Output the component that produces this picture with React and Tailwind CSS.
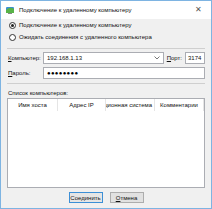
import React from 'react';

const cols = [
  { label: 'Имя хоста', w: 'w-[50px]', align: 'justify-center' },
  { label: 'Адрес IP', w: 'w-[48px]', align: 'justify-center' },
  { label: 'ционная система', w: 'w-[49px]', align: 'justify-end' },
  { label: 'Комментарии', w: 'flex-1', align: 'justify-center' },
];

const Radio = ({ checked, children }) => (
  <div className="flex items-center gap-[3px] h-[12px]">
    <span className="w-[7px] h-[7px] rounded-full border border-[#333] bg-white flex items-center justify-center">
      {checked && <span className="w-[3px] h-[3px] rounded-full bg-[#222]" />}
    </span>
    <span>{children}</span>
  </div>
);

export default function App() {
  return (
    <div
      className="w-[212px] h-[209px] border border-[#7eb4e2] bg-[#f0f0f0] flex flex-col text-[6px] text-[#111] leading-none"
      style={{ fontFamily: '"Liberation Sans", Arial, sans-serif' }}
    >
      {/* Title bar */}
      <div className="h-[18px] bg-white flex items-center px-[4px] shrink-0">
        <svg width="10" height="10" viewBox="0 0 10 10" className="mr-[4px]">
          <rect x="1" y="2" width="8" height="6" rx="1" fill="#3c8fd6" />
          <path d="M1 5 Q5 1 9 4 L9 8 L1 8 Z" fill="#58b348" />
          <rect x="3" y="8" width="4" height="1" fill="#888" />
        </svg>
        <span className="text-[6px]">Подключение к удаленному компьютеру</span>
        <span className="ml-auto mr-[5px] text-[8px] text-[#555]">✕</span>
      </div>

      {/* Body */}
      <div className="flex-1 flex flex-col px-[6px]">
        <div className="pl-[2px] flex flex-col">
          <Radio checked>Подключение к удаленному компьютеру</Radio>
          <Radio>Ожидать соединения с удаленного компьютера</Radio>
        </div>
        <div className="h-px bg-[#cfcfcf] mt-[5px]" />

        <div className="flex items-center h-[12px] mt-[3px]">
          <span className="w-[36px] pl-[1px]"><u>К</u>омпьютер:</span>
          <div className="flex-1 h-[12px] bg-white border border-[#abadb3] flex items-center px-[3px]">
            <span>192.168.1.13</span>
            <svg width="6" height="4" viewBox="0 0 6 4" className="ml-auto">
              <path d="M0.5 0.5 L3 3 L5.5 0.5" stroke="#555" fill="none" strokeWidth="0.8" />
            </svg>
          </div>
          <span className="mx-[3px]"><u>П</u>орт:</span>
          <div className="w-[20px] h-[12px] bg-white border border-[#abadb3] flex items-center px-[2px]">3174</div>
        </div>

        <div className="flex items-center h-[12px] mt-[3px]">
          <span className="w-[36px] pl-[1px]"><u>П</u>ароль:</span>
          <div className="flex-1 h-[12px] bg-white border border-[#abadb3] flex items-center px-[3px] tracking-[0.3px] text-[6px] text-black">
            ●●●●●●●●
          </div>
        </div>

        <div className="h-px bg-[#cfcfcf] mt-[4px]" />
        <div className="pl-[1px] mt-[6px] mb-[2px] h-[6px]">Список компьютеров:</div>

        <div className="h-[90px] bg-white border border-[#abadb3] flex flex-col">
          <div className="h-[12px] flex">
            {cols.map((c, i) => (
              <div
                key={i}
                className={`${c.w} h-full flex items-center ${c.align} overflow-hidden whitespace-nowrap border-r border-[#e5e5e5] px-[2px]`}
              >
                {c.label}
              </div>
            ))}
          </div>
        </div>

        <div className="flex justify-center gap-[7px] mt-[4px]">
          <div className="w-[34px] h-[11px] border border-[#3c8fd6] bg-[#e5e5e5] flex items-center justify-center">
            Соединить
          </div>
          <div className="w-[34px] h-[11px] border border-[#adadad] bg-[#e1e1e1] flex items-center justify-center">
            <span><u>О</u>тмена</span>
          </div>
        </div>
      </div>
    </div>
  );
}
